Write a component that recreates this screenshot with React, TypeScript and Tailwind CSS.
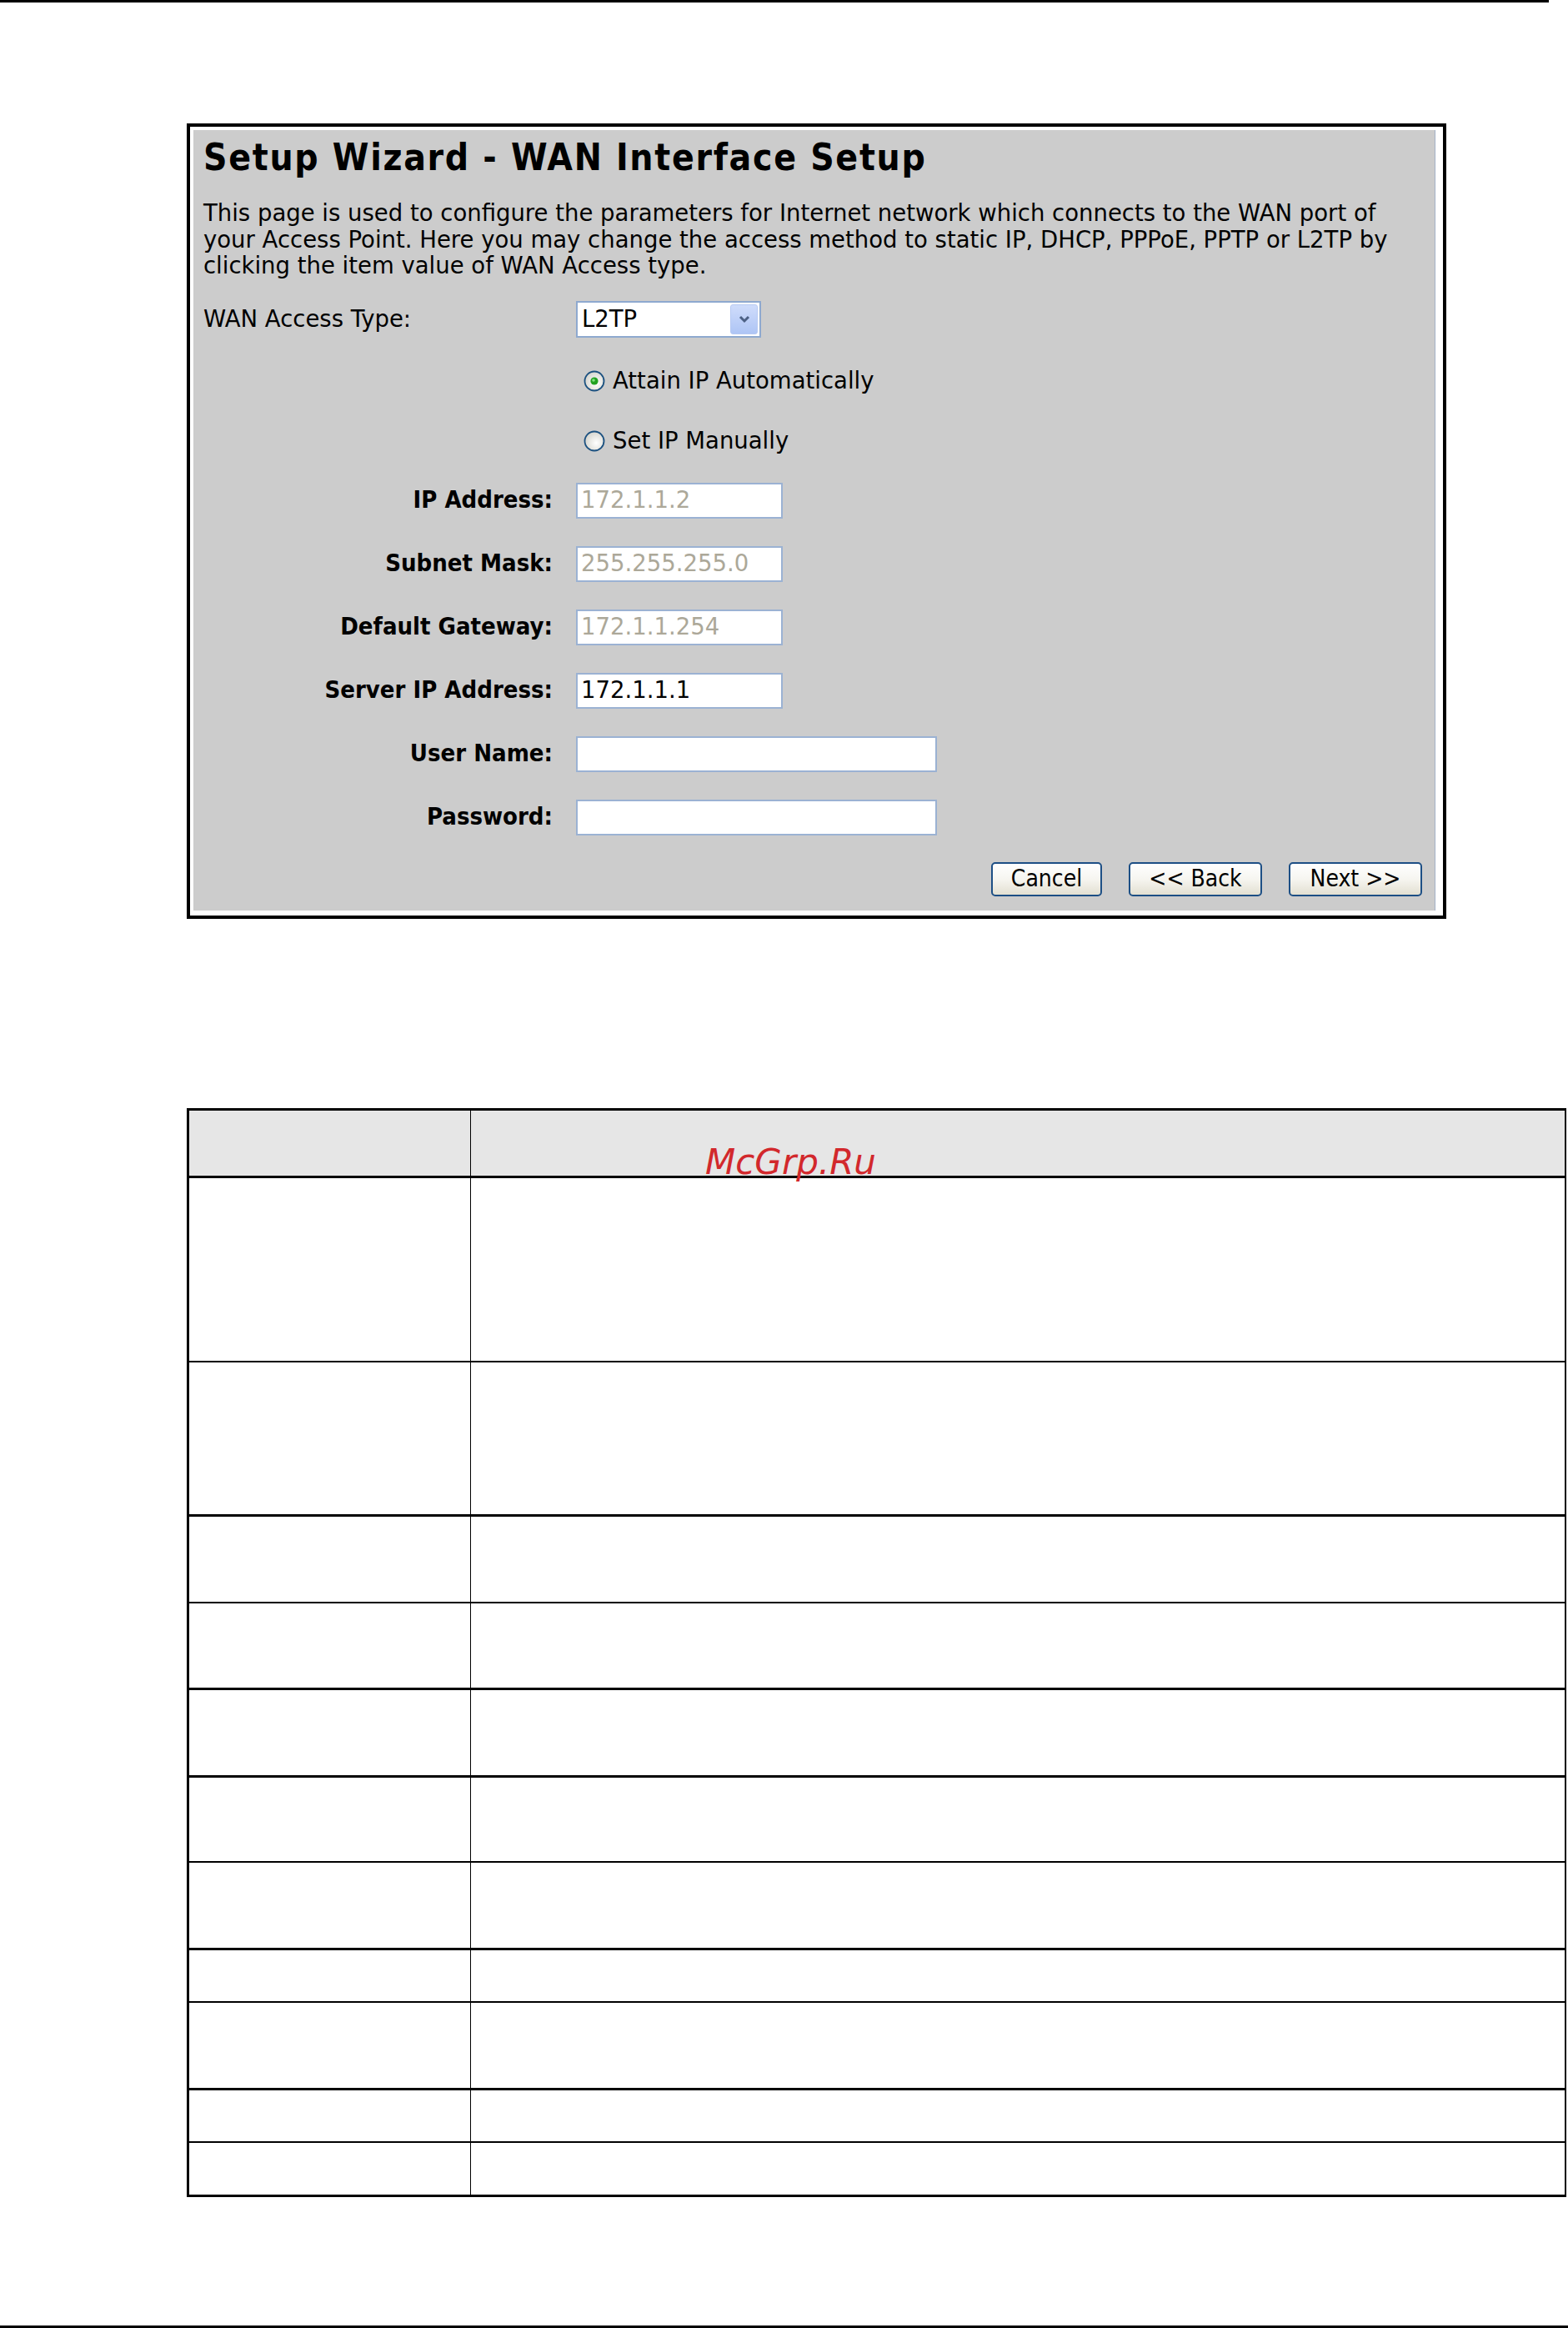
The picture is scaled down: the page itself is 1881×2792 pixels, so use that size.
import React from 'react';

const condensed = "font-['DejaVu_Sans_Condensed','DejaVu_Sans',sans-serif] font-stretch-condensed";
const regular = "font-['DejaVu_Sans','Verdana',sans-serif]";

const Radio: React.FC<{ checked?: boolean }> = ({ checked }) => (
  <svg width="26" height="26" viewBox="0 0 26 26" className="shrink-0">
    <defs>
      <radialGradient id={checked ? 'rgOn' : 'rgOff'} cx="60%" cy="60%" r="60%">
        <stop offset="0%" stopColor="#ffffff" />
        <stop offset="100%" stopColor="#d6d6cf" />
      </radialGradient>
    </defs>
    <circle cx="13" cy="13" r="11.5" fill={`url(#${checked ? 'rgOn' : 'rgOff'})`} stroke="#1c5180" strokeWidth="1.8" />
    {checked && (
      <>
        <circle cx="13" cy="13" r="4.6" fill="#21a121" />
        <circle cx="12" cy="12" r="1.8" fill="#7fe07f" />
      </>
    )}
  </svg>
);

const TextBox: React.FC<{ value?: string; disabled?: boolean; wide?: boolean }> = ({ value, disabled, wide }) => (
  <div
    className={`${wide ? 'w-[433px]' : 'w-[248px]'} h-[43px] border-[2px] border-[#9bb2d3] bg-white flex items-center pl-[4px] ${regular} text-[27.5px] leading-none ${
      disabled ? 'text-[#aca899]' : 'text-black'
    }`}
  >
    {value}
  </div>
);

const Field: React.FC<{ label: string; value?: string; disabled?: boolean; wide?: boolean }> = ({ label, ...rest }) => (
  <div className="flex items-center h-[43px] mt-[33px] gap-[28px]">
    <div className={`w-[419px] text-right font-bold text-[29px] text-black ${condensed}`}>{label}</div>
    <TextBox {...rest} />
  </div>
);

const XpButton: React.FC<{ label: string; w: string }> = ({ label, w }) => (
  <button
    className={`${w} h-[41px] rounded-[5px] border-[2px] border-[#1d4f85] bg-linear-to-b from-white via-[#f6f5f0] to-[#e3e0d2] ${condensed} text-[28px] leading-none text-black flex items-center justify-center`}
  >
    {label}
  </button>
);

const rows = [
  { h: 'h-[81px]', b: 'border-b-[3px]', head: true },
  { h: 'h-[221px]', b: 'border-b-[2px]' },
  { h: 'h-[185px]', b: 'border-b-[3px]' },
  { h: 'h-[104px]', b: 'border-b-[2px]' },
  { h: 'h-[104px]', b: 'border-b-[3px]' },
  { h: 'h-[105px]', b: 'border-b-[3px]' },
  { h: 'h-[102px]', b: 'border-b-[2px]' },
  { h: 'h-[105px]', b: 'border-b-[3px]' },
  { h: 'h-[63px]', b: 'border-b-[2px]' },
  { h: 'h-[105px]', b: 'border-b-[3px]' },
  { h: 'h-[63px]', b: 'border-b-[2px]' },
  { h: 'h-[65px]', b: 'border-b-[3px]' },
];

export default function App() {
  return (
    <div className="w-[1881px] h-[2792px] bg-white flex flex-col">
      <div className="h-[3px] w-[1858px] bg-black shrink-0" />

      {/* screenshot of the wizard page */}
      <div className="ml-[224px] mt-[145px] w-[1511px] border-[4px] border-black bg-white pt-[4px] pl-[4px] pr-[9px] pb-[6px]">
        <div className={`bg-[#cccccc] border-r border-[#a3b1c7] pl-[12px] pr-[15px] pt-[9px] pb-[17px] text-black ${regular}`}>
          <h1 className={`h-[48px] leading-[48px] ${condensed} font-bold text-[44px] tracking-[1.7px] whitespace-nowrap`}>
            Setup Wizard - WAN Interface Setup
          </h1>
          <p className="mt-[27px] text-[27.5px] leading-[31.5px] whitespace-nowrap">
            This page is used to configure the parameters for Internet network which connects to the WAN port of
            <br />
            your Access Point. Here you may change the access method to static IP, DHCP, PPPoE, PPTP or L2TP by
            <br />
            clicking the item value of WAN Access type.
          </p>

          <div className="mt-[26px] flex items-center h-[44px]">
            <div className="w-[447px] text-[27.5px]">WAN Access Type:</div>
            <div className="w-[222px] h-[44px] border-[2px] border-[#8ea9cf] bg-white flex items-center justify-between pl-[5px] pr-[2px]">
              <span className="text-[27.5px] leading-none">L2TP</span>
              <div className="w-[33px] h-[36px] rounded-[3px] border border-[#b6c9f2] bg-linear-to-b from-[#cfdcfb] to-[#aec5f5] flex items-center justify-center">
                <svg width="14" height="10" viewBox="0 0 14 10">
                  <path d="M2 2 L7 7 L12 2" fill="none" stroke="#4d6185" strokeWidth="3" />
                </svg>
              </div>
            </div>
          </div>

          <div className="mt-[32px] h-[40px] flex items-center ml-[456px] gap-[9px] text-[27.5px]">
            <Radio checked />
            <span>Attain IP Automatically</span>
          </div>
          <div className="mt-[32px] h-[40px] flex items-center ml-[456px] gap-[9px] text-[27.5px]">
            <Radio />
            <span>Set IP Manually</span>
          </div>

          <div className="-mt-[3px]">
            <Field label="IP Address:" value="172.1.1.2" disabled />
            <Field label="Subnet Mask:" value="255.255.255.0" disabled />
            <Field label="Default Gateway:" value="172.1.1.254" disabled />
            <Field label="Server IP Address:" value="172.1.1.1" />
            <Field label="User Name:" wide />
            <Field label="Password:" wide />
          </div>

          <div className="mt-[32px] flex justify-end gap-[32px]">
            <XpButton label="Cancel" w="w-[133px]" />
            <XpButton label="<< Back" w="w-[160px]" />
            <XpButton label="Next >>" w="w-[160px]" />
          </div>
        </div>
      </div>

      {/* description table */}
      <div className="relative ml-[224px] mt-[227px] w-[1655px] border-t-[3px] border-l-[3px] border-r-[2px] border-black">
        {rows.map((r, i) => (
          <div key={i} className={`flex ${r.h} ${r.b} border-black ${r.head ? 'bg-[#e6e6e6]' : ''}`}>
            <div className="w-[338px] border-r border-black" />
            <div className="flex-1" />
          </div>
        ))}
        <span className="absolute left-[619px] top-[41px] font-['DejaVu_Sans',sans-serif] italic text-[42px] leading-[42px] text-[#d2282c]">
          McGrp.Ru
        </span>
      </div>

      <div className="mt-auto h-[3px] w-full bg-black shrink-0" />
    </div>
  );
}
